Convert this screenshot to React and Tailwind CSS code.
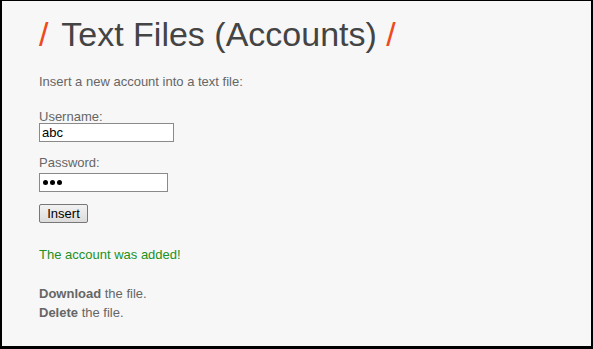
export default function App() {
  return (
    <div className="w-[593px] h-[349px] bg-black pl-[2px] pt-px pr-[2px] pb-[3px]">
      <div className="h-full w-full bg-[#f7f7f7] pl-[37px] pt-[13px] font-['Liberation_Sans',Arial,sans-serif] text-[#666]">
        <h1 className="text-[34px] leading-[40px] text-[#444]">
          <span className="text-[#ee4a1c] mr-[4px]">/</span> Text Files (Accounts){' '}
          <span className="text-[#ee4a1c]">/</span>
        </h1>
        <p className="mt-[20px] text-[13px] leading-[15px]">Insert a new account into a text file:</p>
        <div className="mt-[21px] text-[13px] leading-[13px]">Username:</div>
        <div className="w-[135px] h-[19px] border border-[#8a8a8a] bg-white text-[13px] leading-[17px] text-black pl-[2px]">
          abc
        </div>
        <div className="mt-[14px] text-[13px] leading-[13px]">Password:</div>
        <div className="mt-[4px] w-[129px] h-[19px] border border-[#8a8a8a] bg-white text-black pl-[3px] flex items-center gap-[2px]">
          <span className="w-[5px] h-[5px] rounded-full bg-black" />
          <span className="w-[5px] h-[5px] rounded-full bg-black" />
          <span className="w-[5px] h-[5px] rounded-full bg-black" />
        </div>
        <div className="mt-[12px] w-[49px] h-[19px] border border-[#777] rounded-[2px] bg-gradient-to-b from-[#f2f2f2] to-[#dcdcdc] text-[13px] leading-[17px] text-black text-center">
          Insert
        </div>
        <p className="mt-[24px] text-[13px] leading-[15px] text-[#229022]">The account was added!</p>
        <p className="mt-[22px] text-[13px] leading-[19px]">
          <b>Download</b> the file.
        </p>
        <p className="text-[13px] leading-[19px]">
          <b>Delete</b> the file.
        </p>
      </div>
    </div>
  );
}
